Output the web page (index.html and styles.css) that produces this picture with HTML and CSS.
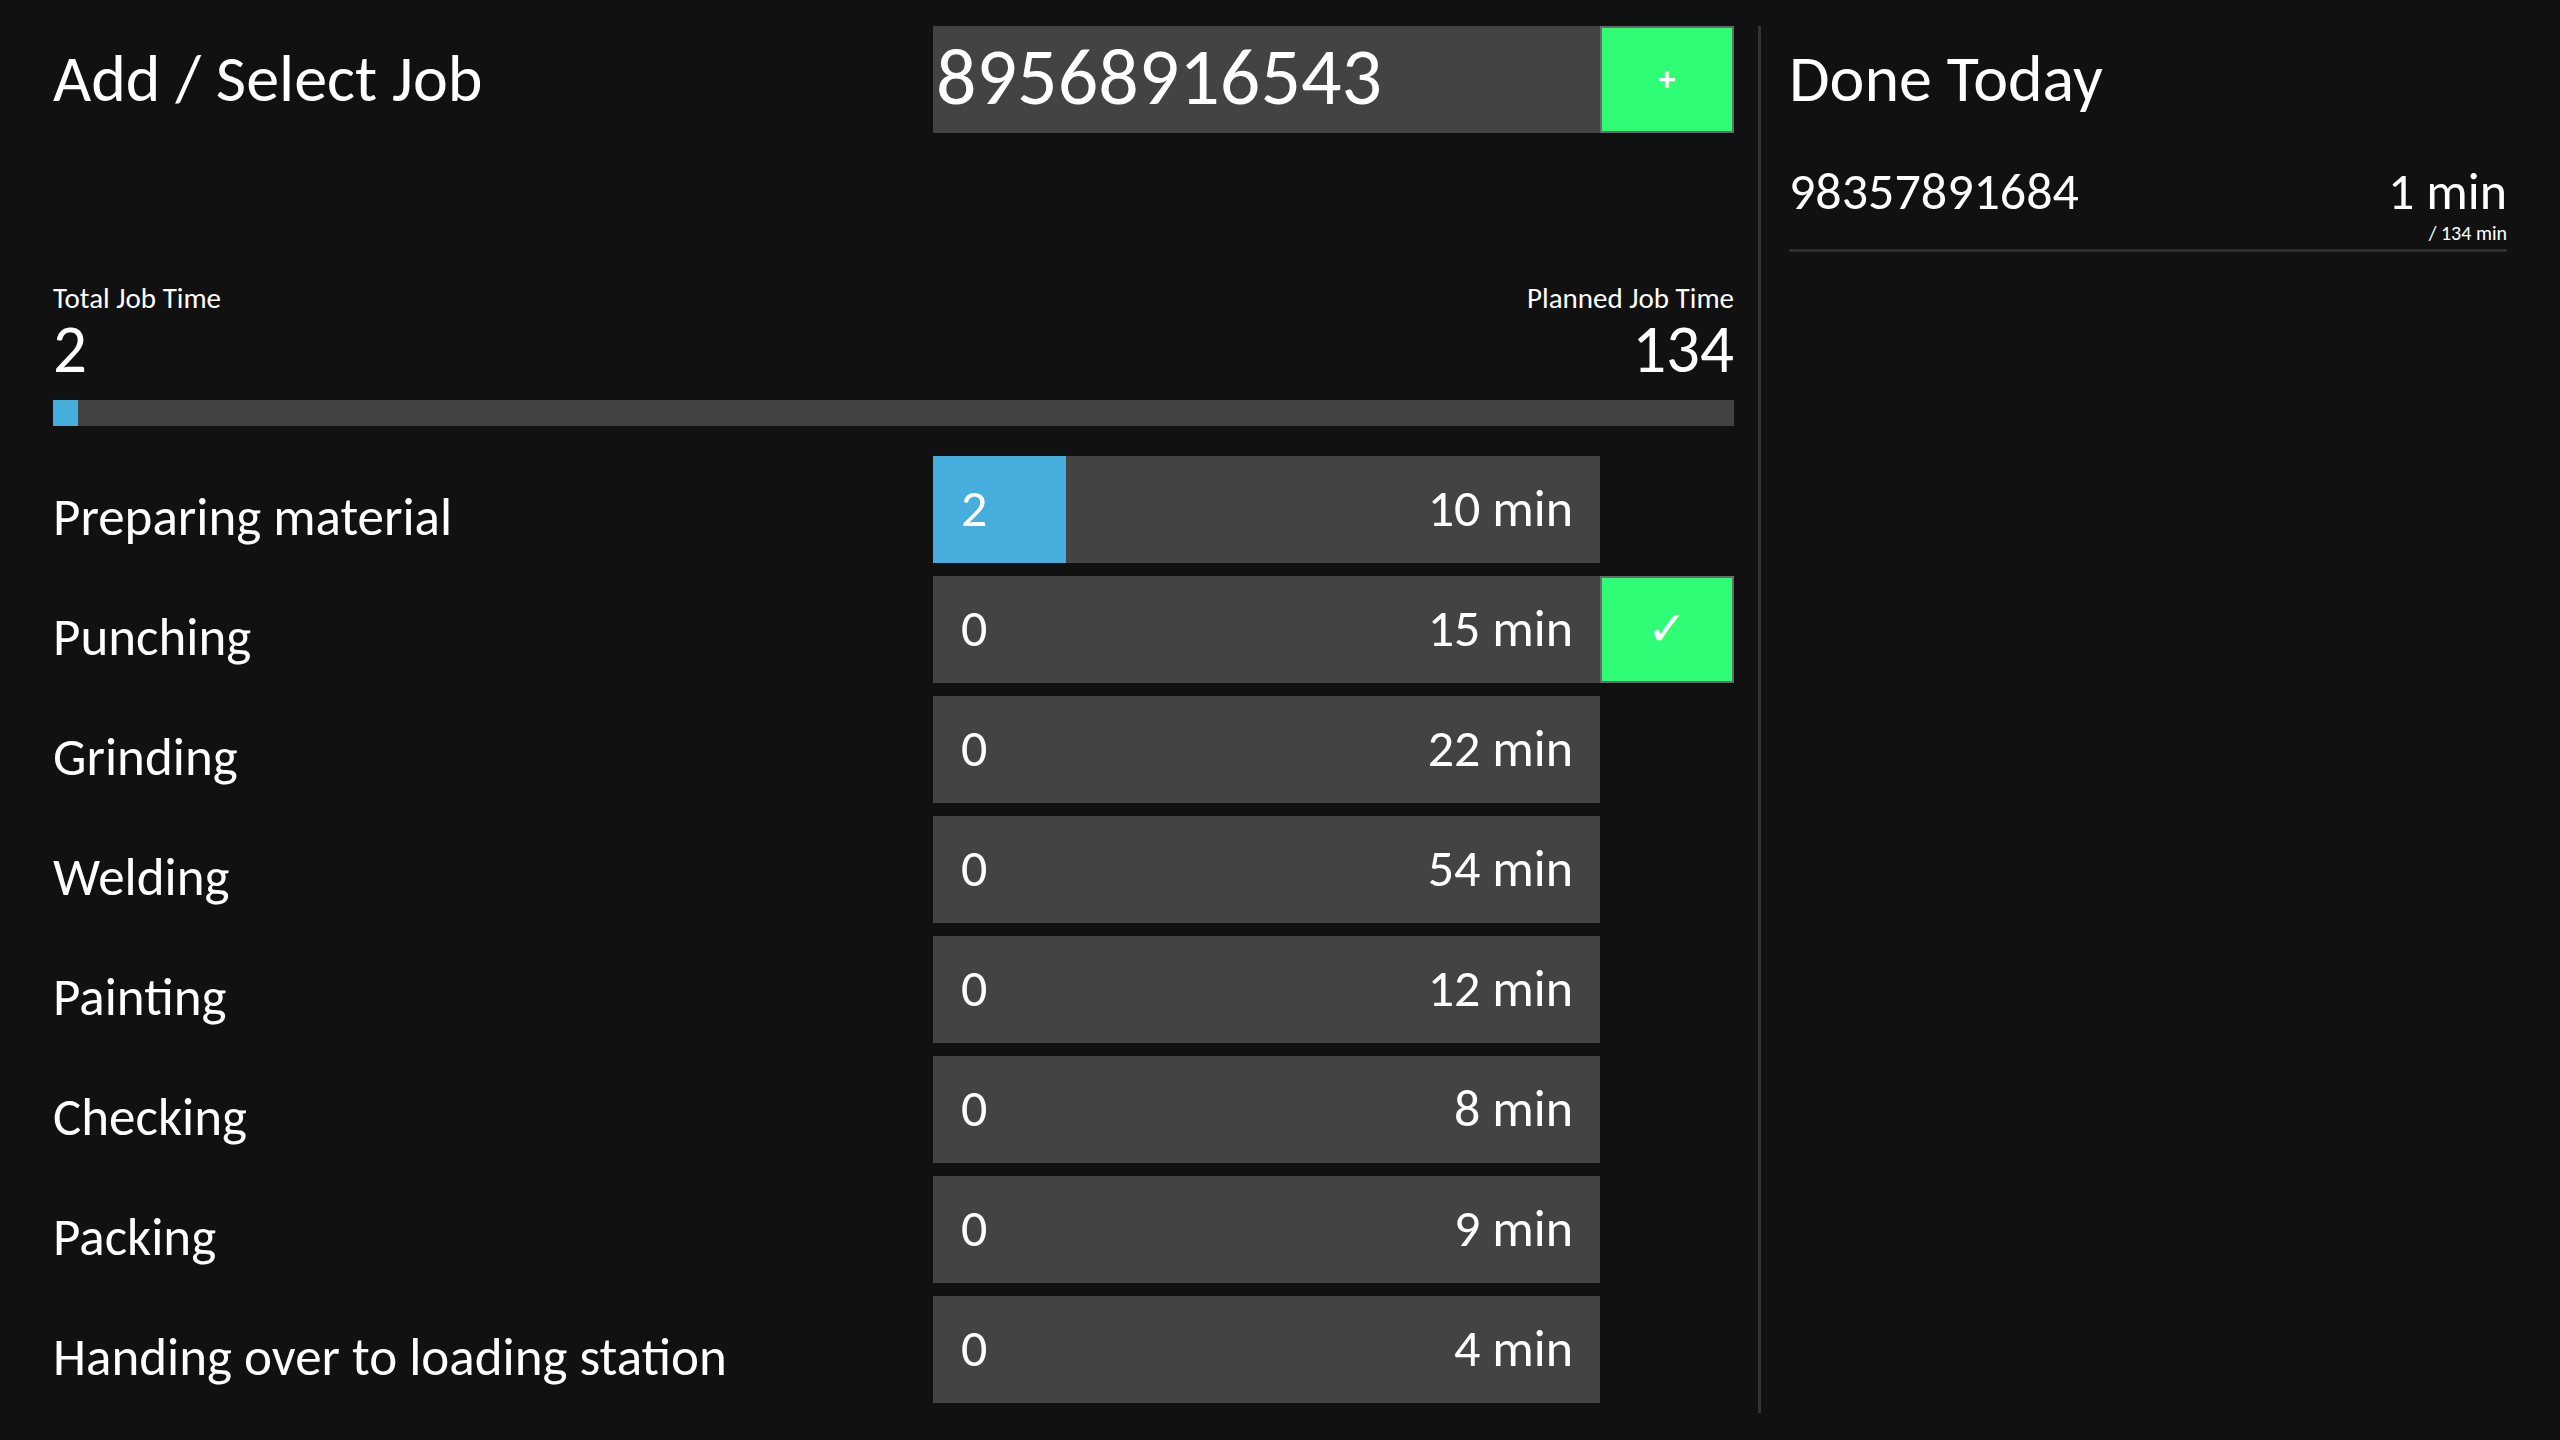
FILE: index.html
```html
<!DOCTYPE html>
<html lang="en">
<head>
<meta charset="utf-8">
<title>Job Timer</title>
<link rel="stylesheet" href="styles.css">
</head>
<body>
<div class="app">
  <main class="main">
    <div class="grid head">
      <h1 class="title">Add / Select Job</h1>
      <div class="job-input">89568916543</div>
      <button class="btn-green btn-plus">+</button>
    </div>

    <section class="totals">
      <div class="totals-row">
        <div class="stat">
          <div class="stat-label">Total Job Time</div>
          <div class="stat-value">2</div>
        </div>
        <div class="stat stat-right">
          <div class="stat-label">Planned Job Time</div>
          <div class="stat-value">134</div>
        </div>
      </div>
      <div class="progress" style="--p:1.5%"></div>
    </section>

    <div class="grid steps">
      <div class="step-label">Preparing material</div>
      <div class="step-bar" style="--p:20%"><span>2</span><span>10 min</span></div>
      <div class="step-action"></div>

      <div class="step-label">Punching</div>
      <div class="step-bar" style="--p:0%"><span>0</span><span>15 min</span></div>
      <button class="btn-green btn-check">&#10003;</button>

      <div class="step-label">Grinding</div>
      <div class="step-bar" style="--p:0%"><span>0</span><span>22 min</span></div>
      <div class="step-action"></div>

      <div class="step-label">Welding</div>
      <div class="step-bar" style="--p:0%"><span>0</span><span>54 min</span></div>
      <div class="step-action"></div>

      <div class="step-label">Painting</div>
      <div class="step-bar" style="--p:0%"><span>0</span><span>12 min</span></div>
      <div class="step-action"></div>

      <div class="step-label">Checking</div>
      <div class="step-bar" style="--p:0%"><span>0</span><span>8 min</span></div>
      <div class="step-action"></div>

      <div class="step-label">Packing</div>
      <div class="step-bar" style="--p:0%"><span>0</span><span>9 min</span></div>
      <div class="step-action"></div>

      <div class="step-label">Handing over to loading station</div>
      <div class="step-bar" style="--p:0%"><span>0</span><span>4 min</span></div>
      <div class="step-action"></div>
    </div>
  </main>

  <div class="divider"></div>

  <aside class="side">
    <h2 class="title side-title">Done Today</h2>
    <ul class="done-list">
      <li class="done-item">
        <span class="done-id">98357891684</span>
        <span class="done-time">
          <span class="done-min">1 min</span>
          <span class="done-planned">/ 134 min</span>
        </span>
      </li>
    </ul>
  </aside>
</div>
</body>
</html>
```

FILE: styles.css
```css
* { box-sizing: border-box; }

html, body {
  margin: 0;
  padding: 0;
  background: #111111;
  color: #ffffff;
  font-family: Carlito, Calibri, "Open Sans", "Liberation Sans", sans-serif;
}

.app {
  display: flex;
  height: 1440px;
  padding: 26px 53px 27px 53px;
}

.main {
  width: 1681px;
  display: flex;
  flex-direction: column;
}

.grid {
  display: grid;
  grid-template-columns: 880px 667px 134px;
}

.head {
  height: 107px;
  align-items: center;
}

.title {
  margin: 0;
  font-size: 66px;
  font-weight: 400;
  line-height: 1;
  padding-bottom: 2px;
}

.job-input {
  height: 107px;
  background: #434343;
  font-size: 80px;
  line-height: 101px;
  padding-left: 3px;
}

.btn-green {
  background: #2efd75;
  border: 2px solid #6a6a6a;
  color: #ffffff;
  font-family: inherit;
  padding: 0;
  margin: 0;
  height: 107px;
  display: flex;
  align-items: center;
  justify-content: center;
}

.btn-plus {
  font-size: 34px;
  font-weight: 700;
  line-height: 1;
}

.btn-check {
  font-size: 48px;
  line-height: 1;
  font-family: "DejaVu Sans", sans-serif;
  font-weight: 400;
  padding-bottom: 4px;
}

.totals {
  margin-top: 149px;
}

.totals-row {
  display: flex;
  justify-content: space-between;
}

.stat-right {
  text-align: right;
}

.stat-label {
  font-size: 29px;
  line-height: 32px;
}

.stat-value {
  font-size: 67px;
  line-height: 70px;
}

.progress {
  margin-top: 16px;
  height: 26px;
  background: linear-gradient(to right, #45aedd var(--p), #424242 var(--p));
}

.steps {
  margin-top: 30px;
  grid-auto-rows: 107px;
  row-gap: 13px;
}

.step-label {
  font-size: 53px;
  line-height: 1;
  align-self: center;
  padding-top: 16px;
}

.step-bar {
  display: flex;
  justify-content: space-between;
  align-items: center;
  padding: 0 27px 4px 28px;
  font-size: 52px;
  background: linear-gradient(to right, #45aedd var(--p), #434343 var(--p));
}

.divider {
  width: 3px;
  background: #333333;
  margin-left: 24px;
  margin-right: 28px;
}

.side {
  flex: 1;
  display: flex;
  flex-direction: column;
}

.side-title {
  height: 107px;
  display: flex;
  align-items: center;
}

.done-list {
  list-style: none;
  margin: 26px 0 0 0;
  padding: 0;
}

.done-item {
  display: flex;
  justify-content: space-between;
  align-items: flex-start;
  border-bottom: 3px solid #2e2e2e;
  padding-bottom: 6px;
}

.done-id {
  font-size: 52px;
  line-height: 64px;
}

.done-time {
  display: flex;
  flex-direction: column;
  align-items: flex-end;
}

.done-min {
  font-size: 52px;
  line-height: 64px;
}

.done-planned {
  font-size: 20px;
  line-height: 20px;
}
```
